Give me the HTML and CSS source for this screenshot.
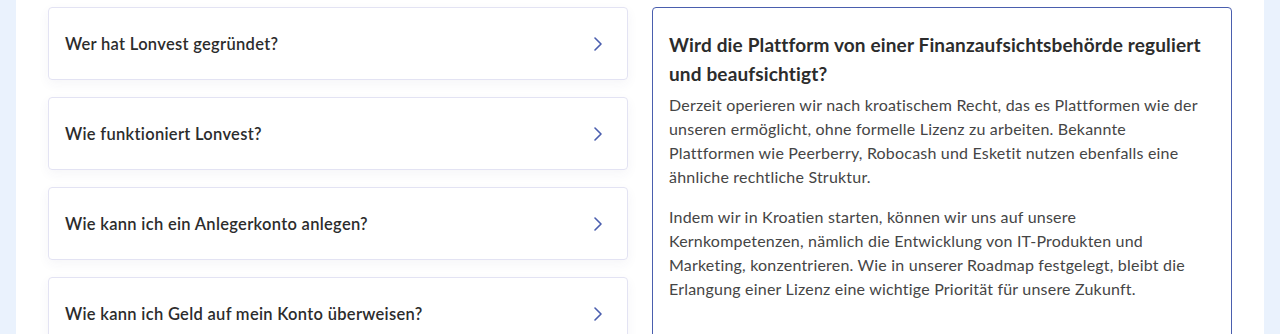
FILE: index.html
```html
<!DOCTYPE html>
<html lang="de">
<head>
  <meta charset="UTF-8">
  <meta name="viewport" content="width=device-width, initial-scale=1.0">
  <title>Lonvest FAQ</title>
  <link rel="stylesheet" href="styles.css">
</head>
<body>
  <div class="page">
    <div class="faq">
      <div class="questions">
        <div class="question">
          <span>Wer hat Lonvest gegründet?</span>
          <svg class="chevron" viewBox="0 0 8 14" width="8" height="14"><path d="M1 1l6 6-6 6" /></svg>
        </div>
        <div class="question">
          <span>Wie funktioniert Lonvest?</span>
          <svg class="chevron" viewBox="0 0 8 14" width="8" height="14"><path d="M1 1l6 6-6 6" /></svg>
        </div>
        <div class="question">
          <span>Wie kann ich ein Anlegerkonto anlegen?</span>
          <svg class="chevron" viewBox="0 0 8 14" width="8" height="14"><path d="M1 1l6 6-6 6" /></svg>
        </div>
        <div class="question">
          <span>Wie kann ich Geld auf mein Konto überweisen?</span>
          <svg class="chevron" viewBox="0 0 8 14" width="8" height="14"><path d="M1 1l6 6-6 6" /></svg>
        </div>
      </div>

      <div class="answer">
        <h3>Wird die Plattform von einer Finanzaufsichtsbehörde reguliert und beaufsichtigt?</h3>
        <p>Derzeit operieren wir nach kroatischem Recht, das es Plattformen wie der unseren ermöglicht, ohne formelle Lizenz zu arbeiten. Bekannte Plattformen wie Peerberry, Robocash und Esketit nutzen ebenfalls eine ähnliche rechtliche Struktur.</p>
        <p>Indem wir in Kroatien starten, können wir uns auf unsere Kernkompetenzen, nämlich die Entwicklung von IT-Produkten und Marketing, konzentrieren. Wie in unserer Roadmap festgelegt, bleibt die Erlangung einer Lizenz eine wichtige Priorität für unsere Zukunft.</p>
      </div>
    </div>
  </div>
</body>
</html>
```

FILE: styles.css
```css
:root {
  --side-blue: #eaf2fd;
  --text-dark: #2c2c2c;
  --text-body: #454545;
  --accent: #4a5eae;
  --card-border: #e3e3f3;
}

body {
  margin: 0;
  background-color: var(--side-blue);
  font-family: Lato, 'Noto Sans', sans-serif;
  color: var(--text-dark);
}

.page {
  margin: 0 16px;
  background-color: white;
  padding: 7px 32px 0;
  height: 327px;
  overflow: hidden;
}

.faq {
  display: grid;
  grid-template-columns: 580px 580px;
  gap: 24px;
}

.questions {
  display: flex;
  flex-direction: column;
  gap: 17px;
}

.question {
  height: 73px;
  box-sizing: border-box;
  display: flex;
  align-items: center;
  justify-content: space-between;
  padding: 1px 25px 0 16px;
  border: 1px solid var(--card-border);
  border-radius: 4px;
  box-shadow: 0 4px 12px rgba(60, 60, 120, 0.05);
  font-size: 16.5px;
  letter-spacing: 0.3px;
  font-weight: 600;
  color: var(--text-dark);
}

.chevron {
  fill: none;
  stroke: var(--accent);
  stroke-width: 1.6;
  stroke-linecap: round;
  stroke-linejoin: round;
}

.answer {
  border: 1px solid var(--accent);
  border-radius: 4px;
  padding: 22px 19px 40px 16px;
  min-height: 400px;
}

.answer h3 {
  margin: 0 0 5px;
  font-size: 19px;
  letter-spacing: 0.15px;
  line-height: 29px;
  font-weight: 700;
  color: var(--text-dark);
}

.answer p {
  margin: 0 0 16px;
  font-size: 16px;
  letter-spacing: 0.2px;
  line-height: 24px;
  color: var(--text-body);
}
```
